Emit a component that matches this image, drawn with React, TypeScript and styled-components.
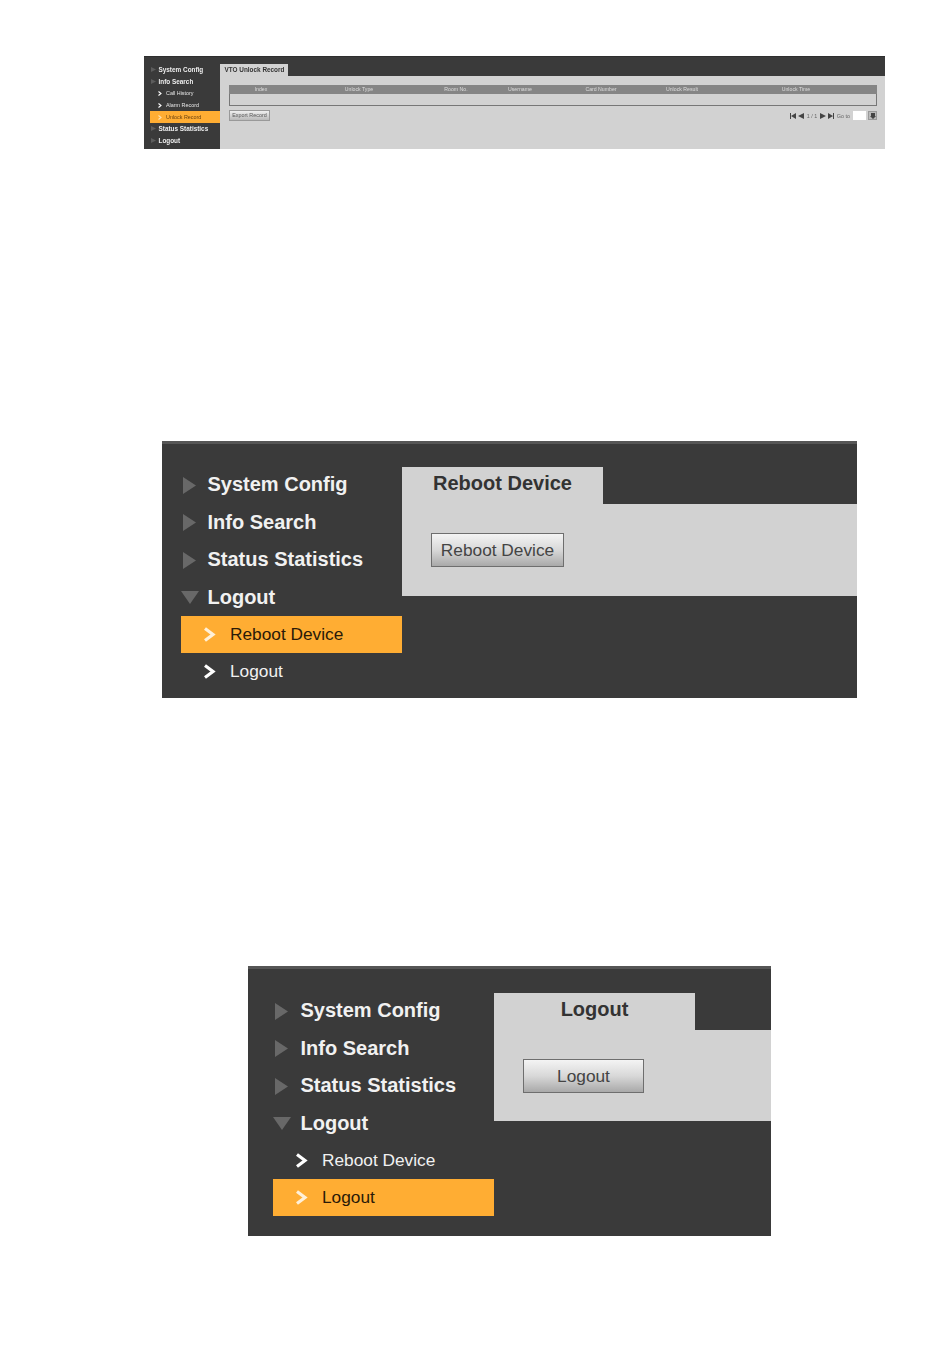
import React from "react";
import styled, { createGlobalStyle } from "styled-components";

const GlobalStyle = createGlobalStyle`
  html, body {
    margin: 0;
    padding: 0;
    background: #fff;
    font-family: "Liberation Sans", Arial, sans-serif;
  }
`;

const Page = styled.div`
  width: 950px;
  height: 1359px;
  overflow: hidden;
  padding-top: 56px;
  box-sizing: border-box;
`;

const Panel = styled.section<{ $left: number; $width: number; $height: number; $top?: number }>`
  display: flex;
  box-sizing: border-box;
  margin-left: ${(p) => p.$left}px;
  margin-top: ${(p) => p.$top || 0}px;
  width: ${(p) => p.$width}px;
  height: ${(p) => p.$height}px;
  background: #3a3a3a;
  border-top: 3px solid #565656;
`;

const SmallPanel = styled(Panel)`
  border-top: 1px solid #2e2e2e;
  filter: blur(0.45px);
`;

/* large screenshots */
const Sidebar = styled.nav<{ $width: number; $indent: number; $pad: number }>`
  flex: none;
  box-sizing: border-box;
  width: ${(p) => p.$width}px;
  padding: ${(p) => p.$pad}px 0 0 ${(p) => p.$indent}px;
`;

const MenuRow = styled.div`
  display: flex;
  align-items: center;
  height: 37.5px;
  color: #f1f1f1;
  font-size: 20px;
  font-weight: 700;
  white-space: nowrap;
`;

const MenuArrow = styled.svg<{ $gap: number }>`
  flex: none;
  width: 18px;
  height: 18px;
  margin-right: ${(p) => p.$gap}px;
  fill: #686868;
`;

const SubRow = styled.div<{ $active?: boolean }>`
  display: flex;
  align-items: center;
  height: 37px;
  padding-left: 22px;
  font-size: 17.3px;
  white-space: nowrap;
  color: ${(p) => (p.$active ? "#2a1a08" : "#f1f1f1")};
  background: ${(p) => (p.$active ? "#ffad33" : "transparent")};
`;

const Chevron = styled.svg<{ $active?: boolean }>`
  flex: none;
  width: 13px;
  height: 15px;
  margin-right: 14px;
  color: ${(p) => (p.$active ? "#fff0d8" : "#fff")};
`;

const Main = styled.div<{ $pad: number }>`
  flex: 1;
  min-width: 0;
  padding-top: ${(p) => p.$pad}px;
`;

const Tab = styled.div`
  box-sizing: border-box;
  width: 201px;
  height: 37px;
  background: #d2d2d2;
  color: #333;
  font-size: 20px;
  font-weight: 700;
  line-height: 32px;
  text-align: center;
`;

const Content = styled.div<{ $height: number }>`
  box-sizing: border-box;
  height: ${(p) => p.$height}px;
  padding: 29px;
  background: #d2d2d2;
`;

const ActionButton = styled.button<{ $width: number }>`
  display: block;
  box-sizing: border-box;
  width: ${(p) => p.$width}px;
  height: 34px;
  padding: 0;
  border: 1px solid #6e6e6e;
  background: linear-gradient(#f4f4f4, #d8d8d8 50%, #a9a9a9);
  color: #444;
  font-family: inherit;
  font-size: 17.3px;
`;

/* small screenshot */
const TinySidebar = styled.nav`
  flex: none;
  box-sizing: border-box;
  width: 76px;
  padding-top: 7px;
`;

const TinyMenuRow = styled.div`
  display: flex;
  align-items: center;
  height: 11.8px;
  padding-left: 7px;
  color: #eee;
  font-size: 6.4px;
  font-weight: 700;
  white-space: nowrap;
`;

const TinyArrow = styled.svg`
  flex: none;
  width: 5px;
  height: 5px;
  margin-right: 2.5px;
  fill: #5c5c5c;
`;

const TinySubRow = styled.div<{ $active?: boolean }>`
  display: flex;
  align-items: center;
  height: 11.8px;
  margin-left: 6px;
  padding-left: 8px;
  font-size: 5.4px;
  white-space: nowrap;
  color: ${(p) => (p.$active ? "#6a4210" : "#e4e4e4")};
  background: ${(p) => (p.$active ? "#ffad33" : "transparent")};
`;

const TinyChevron = styled.svg`
  flex: none;
  width: 4px;
  height: 5px;
  margin-right: 4px;
`;

const TinyMain = styled.div`
  flex: 1;
  min-width: 0;
  padding-top: 7px;
  display: flex;
  flex-direction: column;
`;

const TinyTab = styled.div`
  box-sizing: border-box;
  width: 68px;
  height: 12px;
  padding-left: 4.5px;
  background: #d2d2d2;
  color: #333;
  font-size: 6.4px;
  font-weight: 700;
  line-height: 12px;
  white-space: nowrap;
`;

const TinyContent = styled.div`
  flex: 1;
  padding: 9px 8px 0 9px;
  background: #d2d2d2;
`;

const RecordTable = styled.div`
  box-sizing: border-box;
  height: 21px;
  border: 1px solid #777;
  border-top: 0;
`;

const TableHead = styled.div`
  display: grid;
  grid-template-columns: 64px 132px 62px 66px 96px 66px 1fr;
  height: 9px;
  margin: 0 -1px;
  background: #858585;
`;

const HeadCell = styled.span`
  color: #ddd;
  font-size: 5.2px;
  line-height: 9px;
  text-align: center;
  white-space: nowrap;
`;

const TableFooter = styled.div`
  display: flex;
  justify-content: space-between;
  align-items: flex-start;
  margin-top: 4px;
`;

const ExportButton = styled.button`
  box-sizing: border-box;
  width: 41px;
  height: 11px;
  padding: 0;
  border: 1px solid #999;
  background: linear-gradient(#efefef, #b9b9b9);
  color: #555;
  font-family: inherit;
  font-size: 5.4px;
  line-height: 9px;
  white-space: nowrap;
`;

const Pager = styled.div`
  display: flex;
  align-items: center;
  gap: 2.5px;
  height: 9px;
  margin-top: 1px;
  color: #666;
  font-size: 5.4px;
  white-space: nowrap;
`;

const PagerIcon = styled.svg`
  flex: none;
  width: 6px;
  height: 6px;
  fill: #444;
`;

const PagerInput = styled.div`
  width: 13px;
  height: 9px;
  background: #fff;
`;

const PagerGo = styled.div`
  display: flex;
  align-items: center;
  justify-content: center;
  width: 9px;
  height: 9px;
  box-sizing: border-box;
  border: 1px solid #999;
  background: #bbb;
`;

const SubChevron = ({ active }: { active: boolean }) => (
  <Chevron viewBox="0 0 13 15" $active={active}>
    <path d="M2 1.5 L10 7.5 L2 13.5" fill="none" stroke="currentColor" strokeWidth="3.2" />
  </Chevron>
);

const BigMenu = ({ active, gap }: { active: string; gap: number }) => (
  <>
    {["System Config", "Info Search", "Status Statistics"].map((label) => (
      <MenuRow key={label}>
        <MenuArrow viewBox="0 0 18 18" $gap={gap}>
          <path d="M2 1 L15 9.5 L2 18 Z" />
        </MenuArrow>
        {label}
      </MenuRow>
    ))}
    <MenuRow>
      <MenuArrow viewBox="0 0 18 18" $gap={gap}>
        <path d="M0 3 H18 L9 16 Z" />
      </MenuArrow>
      Logout
    </MenuRow>
    {["Reboot Device", "Logout"].map((label) => (
      <SubRow key={label} $active={label === active}>
        <SubChevron active={label === active} />
        {label}
      </SubRow>
    ))}
  </>
);

const tinyTop = ["System Config", "Info Search"];
const tinySub = ["Call History", "Alarm Record", "Unlock Record"];
const tinyBottom = ["Status Statistics", "Logout"];
const columns = ["Index", "Unlock Type", "Room No.", "Username", "Card Number", "Unlock Result", "Unlock Time"];

const TinyArrowIcon = () => (
  <TinyArrow viewBox="0 0 5 5">
    <path d="M0 0 L5 2.5 L0 5 Z" />
  </TinyArrow>
);

const TinyChevronIcon = ({ color }: { color: string }) => (
  <TinyChevron viewBox="0 0 4 5">
    <path d="M0.5 0.5 L3 2.5 L0.5 4.5" fill="none" stroke={color} strokeWidth="1.1" />
  </TinyChevron>
);

const App = () => {
  return (
    <Page>
      <GlobalStyle />
      <SmallPanel $left={144} $width={741} $height={93}>
        <TinySidebar>
          {tinyTop.map((label) => (
            <TinyMenuRow key={label}>
              <TinyArrowIcon />
              {label}
            </TinyMenuRow>
          ))}
          {tinySub.map((label) => (
            <TinySubRow key={label} $active={label === "Unlock Record"}>
              <TinyChevronIcon color={label === "Unlock Record" ? "#ffe2b0" : "#fff"} />
              {label}
            </TinySubRow>
          ))}
          {tinyBottom.map((label) => (
            <TinyMenuRow key={label}>
              <TinyArrowIcon />
              {label}
            </TinyMenuRow>
          ))}
        </TinySidebar>
        <TinyMain>
          <TinyTab>VTO Unlock Record</TinyTab>
          <TinyContent>
            <RecordTable>
              <TableHead>
                {columns.map((c) => (
                  <HeadCell key={c}>{c}</HeadCell>
                ))}
              </TableHead>
            </RecordTable>
            <TableFooter>
              <ExportButton>Export Record</ExportButton>
              <Pager>
                <PagerIcon viewBox="0 0 6 6">
                  <path d="M0 0 H1 V6 H0 Z M6 0 V6 L1 3 Z" />
                </PagerIcon>
                <PagerIcon viewBox="0 0 6 6">
                  <path d="M6 0 V6 L0 3 Z" />
                </PagerIcon>
                1 / 1
                <PagerIcon viewBox="0 0 6 6">
                  <path d="M0 0 V6 L6 3 Z" />
                </PagerIcon>
                <PagerIcon viewBox="0 0 6 6">
                  <path d="M0 0 V6 L5 3 Z M5 0 H6 V6 H5 Z" />
                </PagerIcon>
                Go to
                <PagerInput />
                <PagerGo>
                  <PagerIcon viewBox="0 0 6 6">
                    <path d="M1 0 H5 V3 H6 L3 6 L0 3 H1 Z" />
                  </PagerIcon>
                </PagerGo>
              </Pager>
            </TableFooter>
          </TinyContent>
        </TinyMain>
      </SmallPanel>

      <Panel $left={162} $width={695} $height={257} $top={292}>
        <Sidebar $width={240} $indent={19} $pad={22}>
          <BigMenu active="Reboot Device" gap={8.5} />
        </Sidebar>
        <Main $pad={23}>
          <Tab>Reboot Device</Tab>
          <Content $height={92}>
            <ActionButton $width={133}>Reboot Device</ActionButton>
          </Content>
        </Main>
      </Panel>

      <Panel $left={248} $width={523} $height={270} $top={268}>
        <Sidebar $width={246} $indent={25} $pad={23}>
          <BigMenu active="Logout" gap={9.5} />
        </Sidebar>
        <Main $pad={24}>
          <Tab>Logout</Tab>
          <Content $height={91}>
            <ActionButton $width={121}>Logout</ActionButton>
          </Content>
        </Main>
      </Panel>
    </Page>
  );
};

export default App;
